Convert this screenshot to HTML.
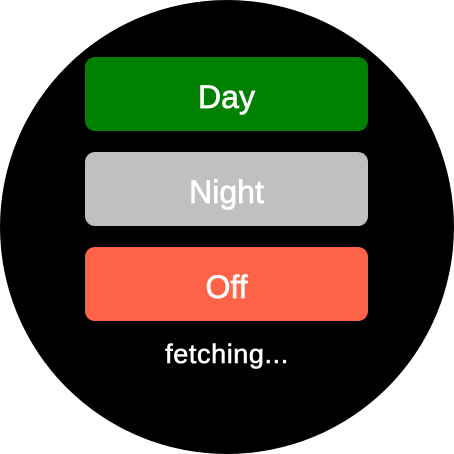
<!DOCTYPE html>
<html><head><style>
html,body{margin:0;padding:0;background:#fff;width:454px;height:454px;overflow:hidden}
.c{position:absolute;left:0;top:0;width:454px;height:454px;border-radius:50%;background:#000}
.b{position:absolute;left:85px;width:283px;height:74px;border-radius:10px;color:#fff;font:normal 32px "Liberation Sans",sans-serif;-webkit-text-stroke:0.7px #fff;display:flex;align-items:center;justify-content:center;box-sizing:border-box;padding-top:6px}
.t{position:absolute;left:0;width:454px;top:339px;text-align:center;color:#fff;font:normal 27px "Liberation Sans",sans-serif;-webkit-text-stroke:0.6px #fff;letter-spacing:0.6px}
</style></head><body>
<div class="c"></div>
<div class="b" style="top:57px;background:#008000">Day</div>
<div class="b" style="top:152px;background:#c0c0c0">Night</div>
<div class="b" style="top:247px;background:#ff6347">Off</div>
<div class="t">fetching...</div>
</body></html>
